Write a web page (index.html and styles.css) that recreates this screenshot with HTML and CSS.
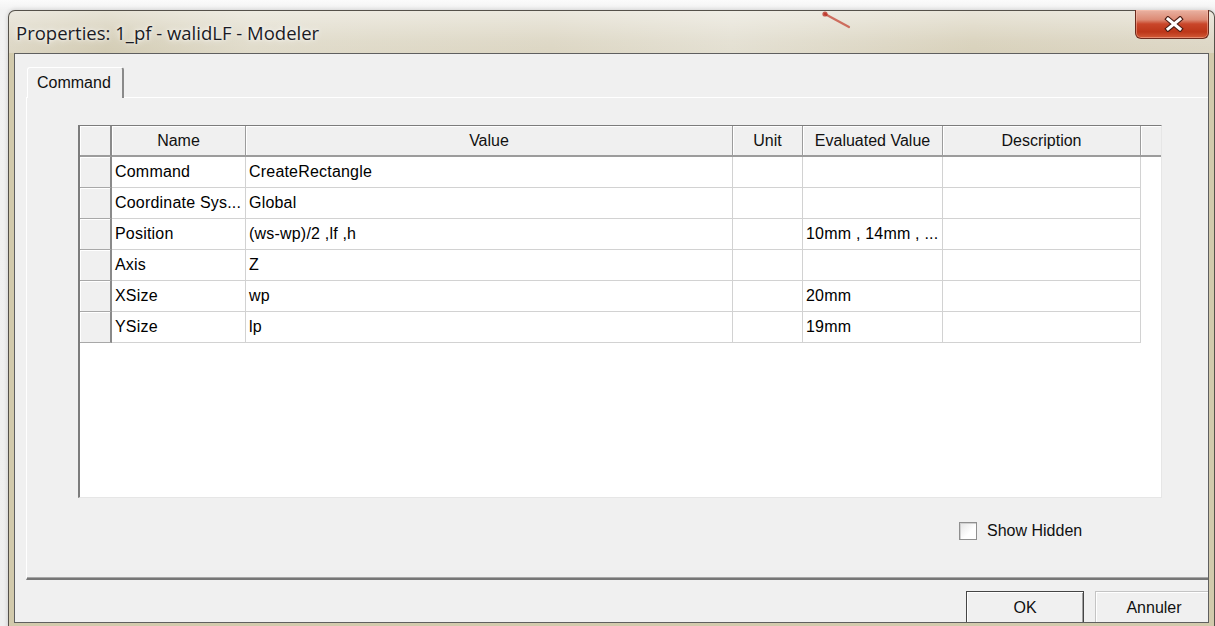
FILE: index.html
```html
<!DOCTYPE html>
<html lang="fr">
<head>
<meta charset="utf-8">
<title>Properties: 1_pf - walidLF - Modeler</title>
<link rel="stylesheet" href="styles.css">
</head>
<body>
<div class="desktop">
  <div class="window">
    <div class="titlebar">
      <svg class="glass-streak" width="60" height="30" viewBox="0 0 60 30" aria-hidden="true">
        <path d="M20 4 L44 17" fill="none" stroke="#c23a2a" stroke-width="2.2" stroke-linecap="round" opacity="0.7"/>
        <circle cx="20" cy="4" r="2.6" fill="#b8281c" opacity="0.75"/>
      </svg>
      <span class="title">Properties: 1_pf - walidLF - Modeler</span>
      <button class="close" type="button" aria-label="Close">
        <svg width="20" height="16" viewBox="0 0 20 16" aria-hidden="true">
          <path d="M4 3 L16 13 M16 3 L4 13" stroke="#4b1d14" stroke-width="5.2" stroke-linecap="square"/>
          <path d="M4 3 L16 13 M16 3 L4 13" stroke="#ffffff" stroke-width="3" stroke-linecap="square"/>
        </svg>
      </button>
    </div>

    <div class="client">
      <div class="tabs">
        <div class="tab">Command</div>
      </div>

      <div class="panel">
        <div class="grid">
          <div class="hc corner"></div>
          <div class="hc">Name</div>
          <div class="hc">Value</div>
          <div class="hc">Unit</div>
          <div class="hc">Evaluated Value</div>
          <div class="hc">Description</div>
          <div class="hc filler"></div>

          <div class="rh"></div>
          <div class="cell">Command</div>
          <div class="cell">CreateRectangle</div>
          <div class="cell"></div>
          <div class="cell"></div>
          <div class="cell"></div>
          <div class="pad"></div>

          <div class="rh"></div>
          <div class="cell">Coordinate Sys...</div>
          <div class="cell">Global</div>
          <div class="cell"></div>
          <div class="cell"></div>
          <div class="cell"></div>
          <div class="pad"></div>

          <div class="rh"></div>
          <div class="cell">Position</div>
          <div class="cell">(ws-wp)/2 ,lf ,h</div>
          <div class="cell"></div>
          <div class="cell">10mm , 14mm , ...</div>
          <div class="cell"></div>
          <div class="pad"></div>

          <div class="rh"></div>
          <div class="cell">Axis</div>
          <div class="cell">Z</div>
          <div class="cell"></div>
          <div class="cell"></div>
          <div class="cell"></div>
          <div class="pad"></div>

          <div class="rh"></div>
          <div class="cell">XSize</div>
          <div class="cell">wp</div>
          <div class="cell"></div>
          <div class="cell">20mm</div>
          <div class="cell"></div>
          <div class="pad"></div>

          <div class="rh"></div>
          <div class="cell">YSize</div>
          <div class="cell">lp</div>
          <div class="cell"></div>
          <div class="cell">19mm</div>
          <div class="cell"></div>
          <div class="pad"></div>
        </div>

        <label class="option">
          <span class="check"></span>
          <span>Show Hidden</span>
        </label>
      </div>

      <div class="actions">
        <button class="btn default" type="button">OK</button>
        <button class="btn" type="button">Annuler</button>
      </div>
    </div>
  </div>
</div>
</body>
</html>
```

FILE: styles.css
```css
html, body {
  margin: 0;
  height: 100%;
}

body {
  background: #f4f4f4;
  font-family: "Liberation Sans", Arial, sans-serif;
  font-size: 16px;
  color: #000;
  overflow: hidden;
}

.desktop {
  width: 1215px;
  height: 626px;
  box-sizing: border-box;
  padding: 10px 0 0 8px;
  overflow: hidden;
  background: linear-gradient(to bottom, #fbfbfb 0, #f2f2f2 10px, #efefef 100%);
}

/* Aero style window frame */
.window {
  width: 1207px;
  height: 619px;
  box-sizing: border-box;
  padding: 0 5px 5px;
  border: 1px solid #55514a;
  border-bottom: 0;
  border-radius: 7px 7px 0 0;
  box-shadow: 0 0 5px rgba(0, 0, 0, 0.18);
  background:
    linear-gradient(to bottom, rgba(255, 255, 255, 0.45) 0, rgba(255, 255, 255, 0.08) 30px, rgba(255, 255, 255, 0) 42px),
    linear-gradient(to right, #ddd7c5 0, #d3ccb4 8%, #e0dbca 20%, #dcd6c3 45%, #e3dfd1 60%, #d8d1bb 80%, #dcd6c4 100%),
    #d2caac;
  background-size: 100% 42px, 100% 42px, auto;
  background-repeat: no-repeat;
}

.titlebar {
  position: relative;
  height: 42px;
  display: flex;
  align-items: flex-start;
}

.glass-streak {
  position: absolute;
  left: 791px;
  top: -1px;
  filter: blur(0.6px);
}

.title {
  position: relative;
  margin: 10px 0 0 2px;
  font-family: "Open Sans", "Noto Sans", sans-serif;
  font-size: 18.5px;
  line-height: 24px;
  color: #1b1b24;
  text-shadow: 0 0 7px rgba(255, 255, 255, 0.9), 0 0 3px rgba(255, 255, 255, 0.8);
}

.close {
  position: relative;
  margin: -1px 0 0 auto;
  width: 74px;
  height: 29px;
  padding: 0;
  display: flex;
  align-items: center;
  justify-content: center;
  border: 1px solid #6c2a1d;
  border-top: 0;
  border-radius: 0 0 6px 6px;
  background: linear-gradient(to bottom, #e9b2a2 0, #dc8a74 35%, #c9462a 50%, #bc3619 78%, #d25a37 100%);
  box-shadow: inset 0 0 0 1px rgba(255, 200, 180, 0.45);
}

.close svg {
  margin-left: 4px;
}

/* Dialog client area */
.client {
  width: 1195px;
  height: 570px;
  box-sizing: border-box;
  border: 1px solid #5f5f5f;
  background: #f0f0f0;
  padding: 13px 0 0 11px;
  overflow: hidden;
}

.tabs {
  display: flex;
  height: 30px;
  padding-left: 1px;
}

.tab {
  position: relative;
  z-index: 1;
  width: 97px;
  height: 31px;
  box-sizing: border-box;
  border: 1px solid #fff;
  border-right: 2px solid #8a8a8a;
  border-bottom: 0;
  border-radius: 3px 3px 0 0;
  background: #f0f0f0;
  padding-left: 9px;
  line-height: 29px;
  color: #111;
}

.panel {
  height: 483px;
  box-sizing: border-box;
  border-top: 1px solid #fff;
  border-left: 1px solid #fff;
  border-bottom: 2px solid #767676;
  box-shadow: inset 0 -1px 0 #a7a7a7;
  padding: 27px 0 0 51px;
}

/* Property grid */
.grid {
  width: 1084px;
  height: 373px;
  box-sizing: border-box;
  border-top: 1px solid #7c7c7c;
  border-left: 2px solid #7c7c7c;
  border-right: 1px solid #e6e6e6;
  border-bottom: 1px solid #e6e6e6;
  background: #fff;
  display: grid;
  grid-template-columns: 32px 134px 487px 70px 140px 198px 20px;
  grid-auto-rows: 31px;
  align-content: start;
}

.hc {
  box-sizing: border-box;
  background: #f0f0f0;
  border-right: 1px solid #9c9c9c;
  border-bottom: 2px solid #9c9c9c;
  box-shadow: inset 1px 1px 0 #fff;
  text-align: center;
  line-height: 29px;
  white-space: nowrap;
  overflow: hidden;
  color: #111;
}

.hc.corner {
  border-right: 2px solid #8a8a8a;
}

.hc.filler {
  border-right: 0;
}

.rh {
  box-sizing: border-box;
  background: #f0f0f0;
  border-right: 2px solid #8a8a8a;
  border-bottom: 1px solid #a8a8a8;
  box-shadow: inset 1px 1px 0 #fff;
}

.cell {
  box-sizing: border-box;
  border-right: 1px solid #d2d2d2;
  border-bottom: 1px solid #d2d2d2;
  padding-left: 3px;
  line-height: 30px;
  letter-spacing: 0.2px;
  white-space: nowrap;
  overflow: hidden;
  color: #000;
}

.pad {
  background: #fff;
}

.option {
  display: flex;
  align-items: center;
  margin: 24px 0 0 881px;
  width: max-content;
  color: #111;
}

.check {
  width: 18px;
  height: 18px;
  box-sizing: border-box;
  border: 1px solid #8f8f8f;
  background: linear-gradient(135deg, #e4e4e4 0, #fff 60%);
  box-shadow: inset 1px 1px 0 #d0d0d0;
  margin-right: 10px;
}

.actions {
  display: flex;
  gap: 11px;
  margin: 11px 0 0 940px;
}

.btn {
  flex-shrink: 0;
  width: 118px;
  height: 33px;
  box-sizing: border-box;
  border: 1px solid #c4c4c4;
  background: #f0f0f0;
  box-shadow: inset 1px 1px 0 #fff;
  font-family: "Liberation Sans", Arial, sans-serif;
  font-size: 16px;
  color: #111;
  padding: 0;
}

.btn.default {
  border: 1px solid #454545;
  box-shadow: inset 1px 1px 0 #fff, inset -1px -1px 0 #a0a0a0;
}
```
